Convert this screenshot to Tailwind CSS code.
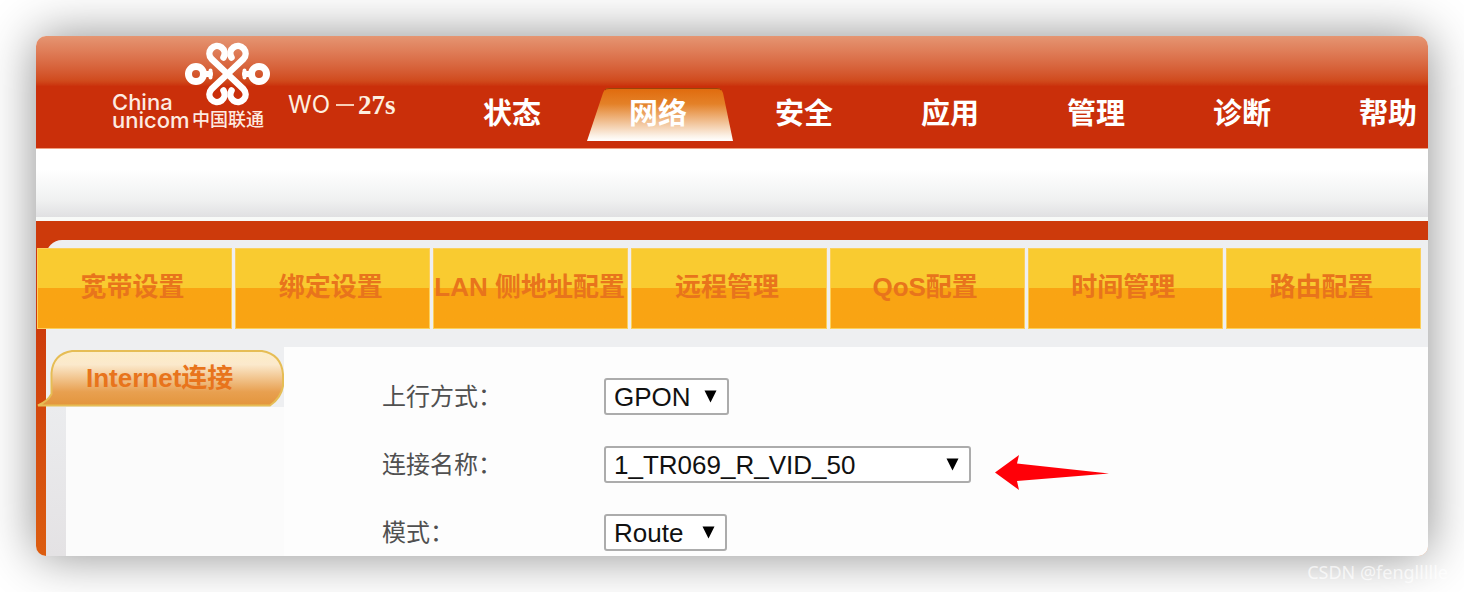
<!DOCTYPE html>
<html lang="zh-CN">
  <head>
    <meta charset="UTF-8" />
    <meta name="viewport" content="width=device-width, initial-scale=1.0" />
    <title>China unicom WO-27s</title>
    <script src="https://cdn.jsdelivr.net/npm/@tailwindcss/browser@4"></script>
  </head>
  <body class="relative min-h-screen overflow-hidden bg-white p-9 font-['Liberation_Sans','Noto_Sans_CJK_SC',sans-serif]">
    <div class="overflow-hidden rounded-[10px] bg-[#fdfdfd] shadow-[0_0_50px_rgba(0,0,0,0.45)]">
      <header class="flex h-[113px] border-b border-[#f0a080] bg-linear-to-b from-[#e59572] via-[#d04a1c] via-40% to-[#ca2f0a] to-45% pl-19 text-white">
        <!-- logo -->
        <div class="w-[175px] shrink-0 pt-[5px] font-['Inter','Noto_Sans_CJK_SC',sans-serif] text-[22px] leading-[18px] font-medium text-[#fdebe2]">
          <div class="flex items-end">
            <span class="w-18">China</span>
            <svg class="mb-1" width="88" height="66" viewBox="0 0 88 66" fill="none" stroke="#fff" stroke-width="6.5" stroke-linecap="round" stroke-linejoin="round">
              <path d="M43.5 33 L27.5 17.8 A7.6 7.6 0 1 1 39.5 16.5" />
              <path d="M43.5 33 L59.5 17.8 A7.6 7.6 0 1 0 47.5 16.5" />
              <path d="M43.5 33 L27.5 48.2 A7.6 7.6 0 1 0 39.5 49.5" />
              <path d="M43.5 33 L59.5 48.2 A7.6 7.6 0 1 1 47.5 49.5" />
              <path d="M21 33 H26 M61 33 H66" stroke-width="6" />
              <path d="M26.5 29.5 V36.5 M60.5 29.5 V36.5" stroke-width="4" />
              <circle cx="12" cy="33" r="7.5" stroke-width="7" />
              <circle cx="75" cy="33" r="7.5" stroke-width="7" />
            </svg>
          </div>
          <div class="flex">
            <span class="w-20">unicom</span>
            <span class="text-[18px]">中国联通</span>
          </div>
        </div>
        <div class="mt-[51px] flex h-9 w-[154px] shrink-0 items-center pl-px text-[#fdf0e0]">
          <span class="w-12 font-['Inter',sans-serif] text-2xl">WO</span>
          <span class="mr-1 h-0.5 w-[18px] bg-[#f8cdb4]"></span>
          <span class="font-['Liberation_Serif',serif] text-[27px] font-bold">27s</span>
        </div>
        <nav class="flex items-end pb-[7px] text-[29px] leading-[53px] font-bold">
          <a href="#" class="w-[146px] shrink-0 pr-1 text-center">状态</a>
          <a href="#" class="relative w-[146px] shrink-0 pr-1 text-center">
            <svg class="absolute inset-0 h-full w-full" viewBox="0 0 146 53" preserveAspectRatio="none">
              <defs>
                <linearGradient id="tab" x1="0" y1="0" x2="0" y2="1">
                  <stop offset="0" stop-color="#e06a0c" />
                  <stop offset="0.3" stop-color="#e48128" />
                  <stop offset="0.9" stop-color="#fbf1e6" />
                  <stop offset="1" stop-color="#fff" />
                </linearGradient>
              </defs>
              <path d="M0 53 L16 5 Q18 0 22 0 H130 Q134 0 136 5 L146 53 Z" fill="url(#tab)" />
              <path d="M18 2 Q19 0.5 22 0.5 H130 Q133 0.5 134 2" fill="none" stroke="#9a4308" />
            </svg>
            <span class="relative">网络</span>
          </a>
          <a href="#" class="w-[146px] shrink-0 pr-1 text-center">安全</a>
          <a href="#" class="w-[146px] shrink-0 pr-1 text-center">应用</a>
          <a href="#" class="w-[146px] shrink-0 pr-1 text-center">管理</a>
          <a href="#" class="w-[146px] shrink-0 pr-1 text-center">诊断</a>
          <a href="#" class="w-[146px] shrink-0 pr-1 text-center">帮助</a>
        </nav>
      </header>

      <div class="h-[72px] border-b-4 border-[#f8faf8] bg-linear-to-b from-white from-30% via-[#f0f1f1] via-75% to-[#e0e0e2]"></div>

      <div class="bg-linear-to-b from-[#cd3a0b] from-30% to-[#dc5d10] pt-[19px] pl-2.5">
        <div class="rounded-tl-2xl bg-[#eeeff1] pt-2">
          <!-- sub menu -->
          <nav class="-ml-[9px] mr-[7px] grid grid-cols-7 gap-[3px] text-center text-[26px] leading-[77px] font-bold whitespace-nowrap text-[#e8741c]">
            <a href="#" class="border border-[#fbd05c] bg-linear-to-b from-[#f9cb30] from-50% to-[#f9a413] to-50% pr-1 pb-0.5">宽带设置</a>
            <a href="#" class="border border-[#fbd05c] bg-linear-to-b from-[#f9cb30] from-50% to-[#f9a413] to-50% pr-1 pb-0.5">绑定设置</a>
            <a href="#" class="border border-[#fbd05c] bg-linear-to-b from-[#f9cb30] from-50% to-[#f9a413] to-50% pr-1 pb-0.5">LAN 侧地址配置</a>
            <a href="#" class="border border-[#fbd05c] bg-linear-to-b from-[#f9cb30] from-50% to-[#f9a413] to-50% pr-1 pb-0.5">远程管理</a>
            <a href="#" class="border border-[#fbd05c] bg-linear-to-b from-[#f9cb30] from-50% to-[#f9a413] to-50% pr-1 pb-0.5">QoS配置</a>
            <a href="#" class="border border-[#fbd05c] bg-linear-to-b from-[#f9cb30] from-50% to-[#f9a413] to-50% pr-1 pb-0.5">时间管理</a>
            <a href="#" class="border border-[#fbd05c] bg-linear-to-b from-[#f9cb30] from-50% to-[#f9a413] to-50% pr-1 pb-0.5">路由配置</a>
          </nav>

          <div class="mt-[18px] flex">
            <aside class="flex w-[238px] shrink-0 flex-col pt-[3px]">
              <a href="#" class="relative -ml-2.5 pl-[50px] text-[26px] leading-[57px] font-bold text-[#e8741c]">
                <svg class="absolute inset-0 h-full w-full" viewBox="0 0 248 57" preserveAspectRatio="none">
                  <defs>
                    <linearGradient id="side" x1="0" y1="0" x2="0" y2="1">
                      <stop offset="0" stop-color="#fdedc8" />
                      <stop offset="0.25" stop-color="#fbe9cc" />
                      <stop offset="0.75" stop-color="#e8a050" />
                      <stop offset="1" stop-color="#e3953c" />
                    </linearGradient>
                  </defs>
                  <path d="M2 55.5 Q12 51 15.5 44 V23 Q17 4 36 1 H226 Q245 4 247 24 V36 Q245 48 234 55.5 Z" fill="url(#side)" stroke="#e6bd55" stroke-width="2" />
                </svg>
                <span class="relative">Internet连接</span>
              </a>
              <div class="flex-1 bg-linear-to-b from-[#ebecee] to-[#e4e2e4] pl-5">
                <div class="h-full bg-[#fbfbfb]"></div>
              </div>
            </aside>

            <main class="flex-1 bg-[#fdfdfd] pt-[31px] pb-[5px] pl-[98px] text-[26px] text-[#111]">
              <form class="grid grid-cols-[222px_1fr] items-center gap-y-[31px]">
                <label for="uplink" class="text-2xl text-[#505050]">上行方式：</label>
                <div class="relative w-[125px]">
                  <select id="uplink" class="block h-[37px] w-full appearance-none rounded-[3px] border-2 border-[#acacac] bg-white pl-2 leading-8">
                    <option>GPON</option>
                  </select>
                  <svg class="pointer-events-none absolute top-3 right-3" width="13" height="13" viewBox="0 0 13 13"><path d="M0.5 0.5 H12.5 L6.5 12.5 Z" /></svg>
                </div>

                <label for="conn" class="text-2xl text-[#505050]">连接名称：</label>
                <div class="flex h-[37px] items-center gap-6">
                  <div class="relative w-[367px]">
                    <select id="conn" class="block h-[37px] w-full appearance-none rounded-[3px] border-2 border-[#acacac] bg-white pl-2 leading-8">
                      <option>1_TR069_R_VID_50</option>
                    </select>
                    <svg class="pointer-events-none absolute top-3 right-3" width="13" height="13" viewBox="0 0 13 13"><path d="M0.5 0.5 H12.5 L6.5 12.5 Z" /></svg>
                  </div>
                  <svg class="mt-4" width="114" height="35" viewBox="0 0 114 35" fill="#ff0008"><path d="M0 17.5 L24 0 L22 8.5 L114 18.5 L22 26 L24 35 Z" /></svg>
                </div>

                <label for="mode" class="text-2xl text-[#505050]">模式：</label>
                <div class="relative w-[123px]">
                  <select id="mode" class="block h-[37px] w-full appearance-none rounded-[3px] border-2 border-[#acacac] bg-white pl-2 leading-8">
                    <option>Route</option>
                  </select>
                  <svg class="pointer-events-none absolute top-3 right-3" width="13" height="13" viewBox="0 0 13 13"><path d="M0.5 0.5 H12.5 L6.5 12.5 Z" /></svg>
                </div>
              </form>
            </main>
          </div>
        </div>
      </div>
    </div>
    <p class="absolute right-4 bottom-1.5 font-['Noto_Sans',sans-serif] text-lg text-white/70">CSDN @fengllllle</p>
  </body>
</html>
